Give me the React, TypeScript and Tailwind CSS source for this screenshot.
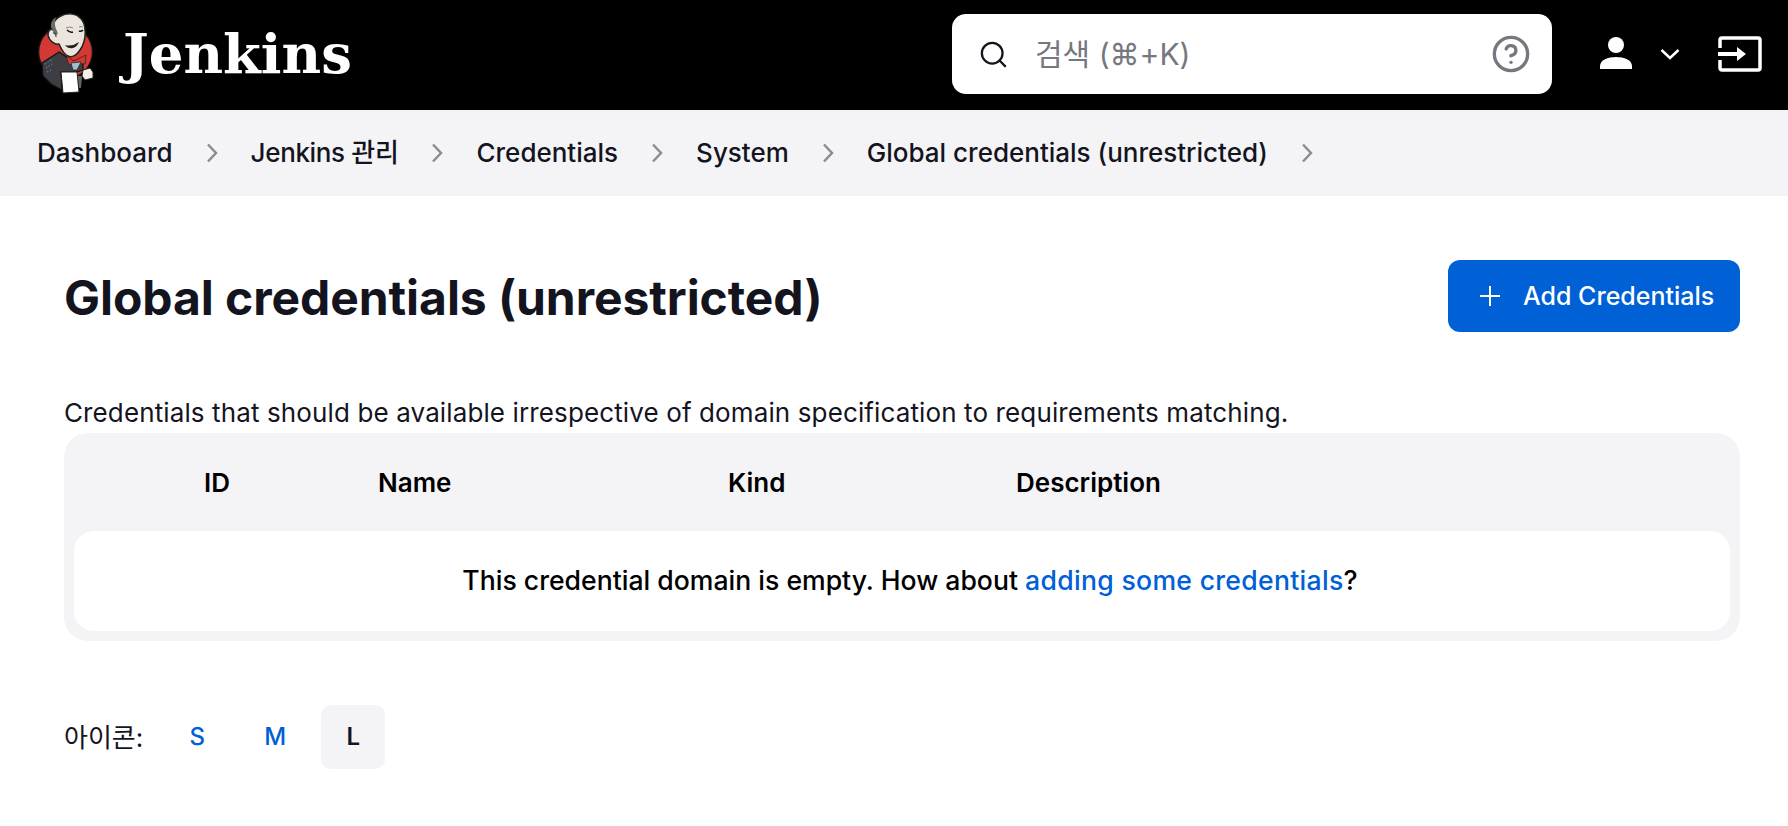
import React from "react";
import { Search, CircleHelp } from "lucide-react";

const sans = "font-['Inter','Noto_Sans_CJK_KR',sans-serif]";

function Logo() {
  return (
    <svg width="58" height="81" viewBox="38 13 58 81" className="shrink-0 mt-[-3px]">
      <circle cx="66.500" cy="52" r="27" fill="#d33833" stroke="#141414" strokeWidth="1.5" />
      <path d="M43 63 L60 52 L66 56 L70 60 L84 63 L84 70 L78 72 L62 72 L63 90 L52 84 L44 76 Z" fill="#3d3d42" stroke="#111" strokeWidth="1.2" />
      <path d="M46 64 L54 59 M47 68 L53 64 M48 72 L52 70" stroke="#49728b" strokeWidth="1.6" strokeDasharray="1.500 1.500" />
      <path d="M54 26 C55 17 66 13 73 14 C81 15 86 22 86 30 C87 38 84 46 81 50 C78 55 73 58 69 56 C64 54 62 48 60 44 C56 45 50 41 49 35 C49 30 52 28 54 30 Z" fill="#ebe5dd" stroke="#222" strokeWidth="1.5" />
      <path d="M54 30 C50 27 52 20 57 17 C55 23 56 27 58 31 C60 35 57 36 55 34 Z" fill="#6b6a6c" />
      <path d="M54 33 q3 -1 3 4" fill="none" stroke="#333" strokeWidth="1" />
      <path d="M68 30 q3 3 6 2 M80 31 q2 1 4 -1" fill="none" stroke="#111" strokeWidth="1.500" />
      <path d="M67 28 q4 -2 7 0 M80 27 q2 -1 4 0" fill="none" stroke="#8a8580" strokeWidth="1" />
      <path d="M66 45 q7 2 14 -3 q-2 5 -6 6 q-5 1 -8 -3 Z" fill="#231f20" />
      <path d="M67 56 L75 61 L87 55 L86 64 L76 63 L70 65 Z" fill="#d33833" stroke="#222" strokeWidth="0.7" />
      <path d="M72 63 L82 62 L78 70 L74 70 Z" fill="#a7bdd0" stroke="#222" strokeWidth="0.7" />
      <path d="M78 76 L83 76 L82 88 L80 88 Z" fill="#666" />
      <path d="M62 72 L78 72 L80 92 L64 93 Z" fill="#fff" stroke="#222" strokeWidth="1" />
      <path d="M84 70 L91 68 L94 72 L94 78 L86 80 L83 76 Z" fill="#f2efe9" stroke="#222" strokeWidth="1" />
    </svg>
  );
}

function Chevron() {
  return (
    <svg width="12" height="20" viewBox="0 0 12 20" fill="none" stroke="#8c8c92" strokeWidth="2.500" className="mx-[33px]">
      <path d="M2 1.500 L10 10 L2 18.500" />
    </svg>
  );
}

function Plus20() {
  return (
    <svg width="20" height="20" viewBox="0 0 20 20" fill="none" stroke="#fff" strokeWidth="2">
      <path d="M10 0 V20 M0 10 H20" />
    </svg>
  );
}

export default function App() {
  return (
    <div className={`${sans} min-h-[826px] bg-white text-[#14141f]`}>
      <header className="h-[110px] bg-black flex items-center pl-[37px] pr-[26px]">
        <Logo />
        <span className="ml-[28px] font-['DejaVu_Serif',serif] font-bold text-[54.500px] leading-none text-white mt-[-2px]">Jenkins</span>
        <div className="ml-auto w-[600px] h-[80px] mt-[-2px] bg-white rounded-[14px] flex items-center pl-[26px] pr-[21px]">
          <Search size={31} strokeWidth={1.75} className="text-[#14141f]" />
          <span className="ml-[26px] text-[30px] text-[#77777f]">검색 (⌘+K)</span>
          <CircleHelp size={40} strokeWidth={2} className="ml-auto text-[#77777f]" />
        </div>
        <svg viewBox="0 0 34 34" width="34" height="34" fill="#fff" className="ml-[47px] mt-[-4px]">
          <circle cx="17" cy="9" r="8" />
          <path d="M1 33 v-3 c0-6 8-9 16-9 s16 3 16 9 v3 z" />
        </svg>
        <svg viewBox="0 0 20 12" width="20" height="12" fill="none" stroke="#fff" strokeWidth="2.500" className="ml-[27px] mt-[-2px]">
          <path d="M1.500 2 L10 10 L18.500 2" />
        </svg>
        <svg viewBox="0 0 44 36" width="44" height="36" fill="none" className="ml-[38px] mt-[-2px]">
          <path d="M2 12 V4 a2 2 0 0 1 2-2 H40 a2 2 0 0 1 2 2 V32 a2 2 0 0 1-2 2 H4 a2 2 0 0 1-2-2 V24" stroke="#fff" strokeWidth="3.500" />
          <path d="M0 18 H22" stroke="#fff" strokeWidth="4" />
          <path d="M19 11 L28 18 L19 25 Z" fill="#fff" />
        </svg>
      </header>

      <nav className="h-[86px] bg-[#f4f4f7] flex items-center pl-[37px] text-[26px] leading-none font-medium">
        <span>Dashboard</span>
        <Chevron />
        <span className="tracking-[-0.35px]">Jenkins 관리</span>
        <Chevron />
        <span>Credentials</span>
        <Chevron />
        <span>System</span>
        <Chevron />
        <span>Global credentials (unrestricted)</span>
        <Chevron />
      </nav>

      <main className="pl-[64px] pr-[48px]">
        <div className="flex items-start justify-between pt-[64px]">
          <h1 className="text-[48px] leading-[72px] pt-[2px] font-bold tracking-[-0.06px]">Global credentials (unrestricted)</h1>
          <button className="w-[292px] h-[72px] rounded-[12px] bg-[#0060d6] text-white flex items-center pl-[32px] text-[25px] font-medium">
            <Plus20 />
            <span className="ml-[23px] mt-[1px]">Add Credentials</span>
          </button>
        </div>

        <p className="mt-[61px] text-[26px] leading-[36px] tracking-[0.12px]">Credentials that should be available irrespective of domain specification to requirements matching.</p>

        <div className="mt-[2px] bg-[#f4f4f7] rounded-[24px] p-[10px] pt-0">
          <div className="h-[98px] grid grid-cols-[304px_350px_288px_1fr] items-center text-[26px] font-semibold text-black">
            <span className="pl-[130px]">ID</span>
            <span>Name</span>
            <span>Kind</span>
            <span>Description</span>
          </div>
          <div className="h-[100px] bg-white rounded-[20px] flex items-center justify-center pl-[16px] text-[26.600px] font-medium text-black">
            <span>This credential domain is empty. How about <span className="text-[#0060d6] tracking-[0.3px]">adding some credentials</span>?</span>
          </div>
        </div>

        <div className="mt-[64px] flex items-center text-[26px]">
          <span>아이콘:</span>
          <span className="ml-[22px] w-[64px] h-[64px] flex items-center justify-center text-[#0060d6] text-[24px] font-medium">S</span>
          <span className="ml-[14px] w-[64px] h-[64px] flex items-center justify-center text-[#0060d6] text-[24px] font-medium">M</span>
          <span className="ml-[14px] w-[64px] h-[64px] flex items-center justify-center rounded-[10px] bg-[#f4f4f7] text-[24px] font-semibold">L</span>
        </div>
      </main>
    </div>
  );
}
